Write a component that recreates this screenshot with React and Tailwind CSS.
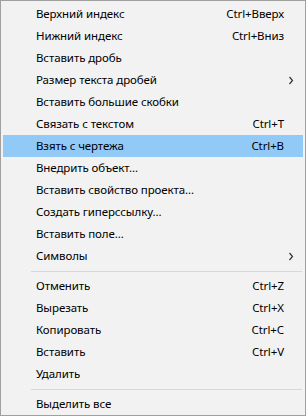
const groups = [
  [
    { label: "Верхний индекс", shortcut: "Ctrl+Вверх" },
    { label: "Нижний индекс", shortcut: "Ctrl+Вниз" },
    { label: "Вставить дробь" },
    { label: "Размер текста дробей", submenu: true },
    { label: "Вставить большие скобки" },
    { label: "Связать с текстом", shortcut: "Ctrl+T" },
    { label: "Взять с чертежа", shortcut: "Ctrl+B", active: true },
    { label: "Внедрить объект..." },
    { label: "Вставить свойство проекта..." },
    { label: "Создать гиперссылку..." },
    { label: "Вставить поле..." },
    { label: "Символы", submenu: true },
  ],
  [
    { label: "Отменить", shortcut: "Ctrl+Z" },
    { label: "Вырезать", shortcut: "Ctrl+X" },
    { label: "Копировать", shortcut: "Ctrl+C" },
    { label: "Вставить", shortcut: "Ctrl+V" },
    { label: "Удалить" },
  ],
  [{ label: "Выделить все" }],
];

function Chevron() {
  return (
    <svg width="6" height="9" viewBox="0 0 6 9" className="text-[#333]">
      <path d="M1.5 1 L4.5 4.5 L1.5 8" fill="none" stroke="currentColor" strokeWidth="1.2" />
    </svg>
  );
}

function MenuItem({ item }) {
  return (
    <div
      className={
        "flex h-[22px] items-center mx-[2px] pl-[33px] pr-[19px] " +
        (item.active ? "bg-[#91c9f7]" : "")
      }
    >
      <span className="flex-1">{item.label}</span>
      {item.shortcut && <span>{item.shortcut}</span>}
      {item.submenu && (
        <span className="-mr-[13px] flex w-[12px] justify-center">
          <Chevron />
        </span>
      )}
    </div>
  );
}

export default function App() {
  return (
    <div
      className="w-[306px] h-[416px] bg-[#f2f2f2] border border-[#a0a0a0] py-[2px] text-[11.5px] tracking-[-0.1px] text-black"
      style={{ fontFamily: '"Noto Sans", "Open Sans", sans-serif' }}
    >
      {groups.map((group, gi) => (
        <div key={gi}>
          {gi > 0 && (
            <div className="flex h-[8px] items-center pl-[30px] pr-[3px]">
              <div className="h-px flex-1 bg-[#d7d7d7]" />
            </div>
          )}
          {group.map((item) => (
            <MenuItem key={item.label} item={item} />
          ))}
        </div>
      ))}
    </div>
  );
}
